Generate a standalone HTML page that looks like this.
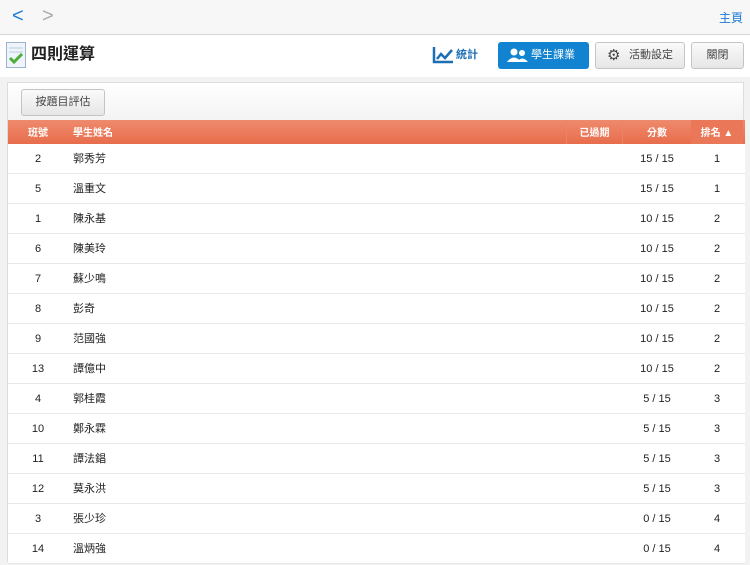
<!DOCTYPE html>
<html><head><meta charset="utf-8"><style>
*{margin:0;padding:0;box-sizing:border-box}
body{width:750px;height:562px;overflow:hidden;background:#f2f2f2;font-family:"Liberation Sans","Noto Sans CJK TC",sans-serif;position:relative}
.top{position:absolute;left:0;top:0;width:750px;height:35px;background:#f7f7f7;border-bottom:1px solid #d6d6d6}
.nav{position:absolute;top:5px;font-size:20px;color:#1a7ad4;line-height:22px}
.title{position:absolute;left:0;top:35px;width:750px;height:42px;background:#fff}
.btn{position:absolute;height:27px;border:1px solid #c4c4c4;border-radius:3px;background:linear-gradient(#fafafa,#e6e6e6);font-size:11px;color:#444;text-align:center;line-height:25px}
.panel{position:absolute;left:7px;top:82px;width:737px;height:480px;background:#fff;border:1px solid #ddd}
.tool{position:absolute;left:0;top:0;width:735px;height:37px;background:linear-gradient(#fff,#f3f3f3)}
.hdr{position:absolute;left:0;top:37px;width:737px;height:24px;background:linear-gradient(#ef8a6d,#e76d4c);color:#fff;font-size:10px;font-weight:bold;line-height:27px;overflow:hidden}
.hdr span,.row span{position:absolute;top:0;height:100%}
.row{position:absolute;left:0;width:737px;height:30px;border-bottom:1px solid #e8e8e8;font-size:11px;color:#222;line-height:31px;background:#fff}
.c1{left:0;width:60px;text-align:center}
.c2{left:65px}
.c4{left:615px;width:68px;text-align:center}
.c5{left:683px;width:52px;text-align:center}
</style></head><body>
<div class="top">
<div class="nav" style="left:12px">&lt;</div>
<div class="nav" style="left:42px;color:#aaa">&gt;</div>
<div style="position:absolute;right:7px;top:10px;font-size:12px;line-height:16px;color:#1a7ad4">主頁</div>
</div>
<div class="title">
<svg style="position:absolute;left:6px;top:7px" width="20" height="26" viewBox="0 0 20 26"><rect x="0.5" y="0.5" width="19" height="25" fill="#eef4fa" stroke="#9bb3cc"/><line x1="3" y1="6" x2="17" y2="6" stroke="#b8cde0"/><line x1="3" y1="10" x2="17" y2="10" stroke="#b8cde0"/><path d="M4 16 L8 20 L16 12" stroke="#4fae3a" stroke-width="3" fill="none"/></svg>
<div style="position:absolute;left:31px;top:9px;font-size:16px;line-height:22px;font-weight:bold;color:#222">四則運算</div>
<svg style="position:absolute;left:432px;top:11px" width="22" height="18" viewBox="0 0 22 18"><path d="M2 1 V16 H21" stroke="#1a6fb5" stroke-width="2.5" fill="none"/><path d="M5 13 L9 8 L13 12 L20 4" stroke="#1a6fb5" stroke-width="2.5" fill="none"/></svg>
<div style="position:absolute;left:456px;top:12px;font-size:11px;line-height:16px;color:#1a6fb5;font-weight:bold">統計</div>
<div style="position:absolute;left:498px;top:7px;width:91px;height:27px;border-radius:3px;background:#1283d0;color:#fff;font-size:11px;line-height:26px;padding-left:33px">學生課業</div>
<svg style="position:absolute;left:507px;top:13px" width="22" height="14" viewBox="0 0 22 14"><circle cx="7" cy="4" r="3.5" fill="#fff"/><path d="M0 14 Q7 5 14 14Z" fill="#fff"/><circle cx="15" cy="5" r="3" fill="#fff"/><path d="M10 14 Q15 7 21 14Z" fill="#fff"/></svg>
<div class="btn" style="left:595px;top:7px;width:90px;padding-left:22px">活動設定</div>
<div style="position:absolute;left:607px;top:13px;font-size:15px;color:#444;line-height:15px">⚙</div>
<div class="btn" style="left:691px;top:7px;width:53px">關閉</div>
</div>
<div class="panel">
<div class="tool"><div class="btn" style="left:13px;top:6px;width:84px">按題目評估</div></div>
<div class="hdr"><span class="c1">班號</span><span class="c2">學生姓名</span><span style="left:558px;width:57px;text-align:center;border-left:1px solid #ec8366;border-right:1px solid #ec8366">已過期</span><span class="c4">分數</span><span class="c5" style="background:#ea7757">排名 ▲</span></div>
<div class="row" style="top:61px"><span class="c1">2</span><span class="c2">郭秀芳</span><span class="c4">15 / 15</span><span class="c5">1</span></div>
<div class="row" style="top:91px"><span class="c1">5</span><span class="c2">溫重文</span><span class="c4">15 / 15</span><span class="c5">1</span></div>
<div class="row" style="top:121px"><span class="c1">1</span><span class="c2">陳永基</span><span class="c4">10 / 15</span><span class="c5">2</span></div>
<div class="row" style="top:151px"><span class="c1">6</span><span class="c2">陳美玲</span><span class="c4">10 / 15</span><span class="c5">2</span></div>
<div class="row" style="top:181px"><span class="c1">7</span><span class="c2">蘇少鳴</span><span class="c4">10 / 15</span><span class="c5">2</span></div>
<div class="row" style="top:211px"><span class="c1">8</span><span class="c2">彭奇</span><span class="c4">10 / 15</span><span class="c5">2</span></div>
<div class="row" style="top:241px"><span class="c1">9</span><span class="c2">范國強</span><span class="c4">10 / 15</span><span class="c5">2</span></div>
<div class="row" style="top:271px"><span class="c1">13</span><span class="c2">譚億中</span><span class="c4">10 / 15</span><span class="c5">2</span></div>
<div class="row" style="top:301px"><span class="c1">4</span><span class="c2">郭桂霞</span><span class="c4">5 / 15</span><span class="c5">3</span></div>
<div class="row" style="top:331px"><span class="c1">10</span><span class="c2">鄭永霖</span><span class="c4">5 / 15</span><span class="c5">3</span></div>
<div class="row" style="top:361px"><span class="c1">11</span><span class="c2">譚法錩</span><span class="c4">5 / 15</span><span class="c5">3</span></div>
<div class="row" style="top:391px"><span class="c1">12</span><span class="c2">莫永洪</span><span class="c4">5 / 15</span><span class="c5">3</span></div>
<div class="row" style="top:421px"><span class="c1">3</span><span class="c2">張少珍</span><span class="c4">0 / 15</span><span class="c5">4</span></div>
<div class="row" style="top:451px"><span class="c1">14</span><span class="c2">溫炳強</span><span class="c4">0 / 15</span><span class="c5">4</span></div>
</div>
</body></html>
